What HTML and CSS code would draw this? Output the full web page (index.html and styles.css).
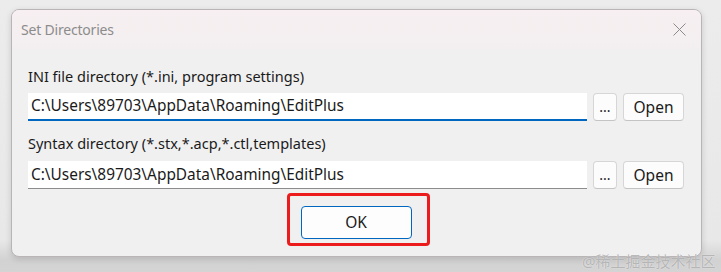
FILE: index.html
```html
<html lang="en">
<head>
  <meta charset="UTF-8">
  <title>Set Directories</title>
  <link rel="stylesheet" href="styles.css">
</head>
<body>
  <div class="window">
    <div class="titlebar">
      <span class="title">Set Directories</span>
      <svg class="close" width="13" height="13" viewBox="0 0 13 13">
        <line x1="0.5" y1="0.5" x2="12.5" y2="12.5" stroke="#8a8a8a" stroke-width="1"/>
        <line x1="12.5" y1="0.5" x2="0.5" y2="12.5" stroke="#8a8a8a" stroke-width="1"/>
      </svg>
    </div>

    <div class="content">
      <div class="field">
        <div class="label">INI file directory (*.ini, program settings)</div>
        <div class="row">
          <div class="input focused">C:\Users\89703\AppData\Roaming\EditPlus</div>
          <div class="btn small">...</div>
          <div class="btn open">Open</div>
        </div>
      </div>

      <div class="field second">
        <div class="label">Syntax directory (*.stx,*.acp,*.ctl,templates)</div>
        <div class="row">
          <div class="input">C:\Users\89703\AppData\Roaming\EditPlus</div>
          <div class="btn small">...</div>
          <div class="btn open">Open</div>
        </div>
      </div>

      <div class="actions">
        <div class="ok-wrap">
          <div class="btn ok">OK</div>
          <div class="highlight"></div>
        </div>
      </div>
    </div>
  </div>

  <div class="watermark">@稀土掘金技术社区</div>
</body>
</html>
```

FILE: styles.css
```css
body {
  margin: 0;
  padding: 0;
  width: 721px;
  height: 272px;
  overflow: hidden;
  background: linear-gradient(#ececec 0, #e8e8e8 240px, #d2d2d2 260px, #d4d4d4 272px);
  font-family: "Noto Sans", "Noto Sans CJK SC", sans-serif;
  position: relative;
}

.window {
  margin: 9px 0 0 11px;
  width: 691px;
  height: 248px;
  box-sizing: border-box;
  border: 1px solid #b9b5b7;
  border-radius: 8px;
  background-color: #f0f0f0;
  box-shadow: 0 2px 6px rgba(0, 0, 0, 0.15);
  overflow: hidden;
}

.titlebar {
  height: 39px;
  display: flex;
  align-items: center;
  justify-content: space-between;
  padding: 0 15px 0 9px;
  background: linear-gradient(#f7eff1, #f3eff0);
}

.title {
  font-size: 14px;
  color: #8c8c8c;
  letter-spacing: -0.2px;
}

.close {
  display: block;
}

.content {
  padding: 17px 17px 0 16px;
}

.label {
  font-size: 14.5px;
  line-height: 20px;
  height: 20px;
  color: #1a1a1a;
}

.row {
  display: flex;
  gap: 6px;
  margin-top: 7px;
  height: 28px;
}

.field.second {
  margin-top: 12px;
}

.field.second .row {
  margin-top: 8px;
}

.input {
  width: 559px;
  box-sizing: border-box;
  background-color: #ffffff;
  border-bottom: 1px solid #8c8c8c;
  font-size: 15.4px;
  line-height: 27px;
  padding-left: 3px;
  color: #1a1a1a;
}

.input.focused {
  border-bottom: 2px solid #0067c0;
  line-height: 26px;
}

.btn {
  box-sizing: border-box;
  background-color: #fcfcfc;
  border: 1px solid #d6d6d6;
  border-bottom-color: #c4c4c4;
  border-radius: 4px;
  font-size: 15.5px;
  color: #1a1a1a;
  text-align: center;
  line-height: 26px;
}

.btn.small {
  width: 24px;
  font-size: 14px;
}

.btn.open {
  width: 61px;
}

.actions {
  display: flex;
  justify-content: center;
  margin-top: 17px;
}

.ok-wrap {
  position: relative;
}

.btn.ok {
  width: 111px;
  height: 33px;
  line-height: 31px;
  background-color: #fdfdfd;
  border: 1px solid #0067c0;
}

.highlight {
  position: absolute;
  left: -14px;
  top: -13px;
  width: 143px;
  height: 53px;
  box-sizing: border-box;
  border: 3px solid #ec1c1c;
  border-radius: 4px;
}

.watermark {
  position: absolute;
  left: 582px;
  top: 250px;
  font-size: 15px;
  color: rgba(140, 140, 140, 0.6);
  text-shadow: 0 0 1px rgba(255, 255, 255, 0.9);
  white-space: nowrap;
}
```
